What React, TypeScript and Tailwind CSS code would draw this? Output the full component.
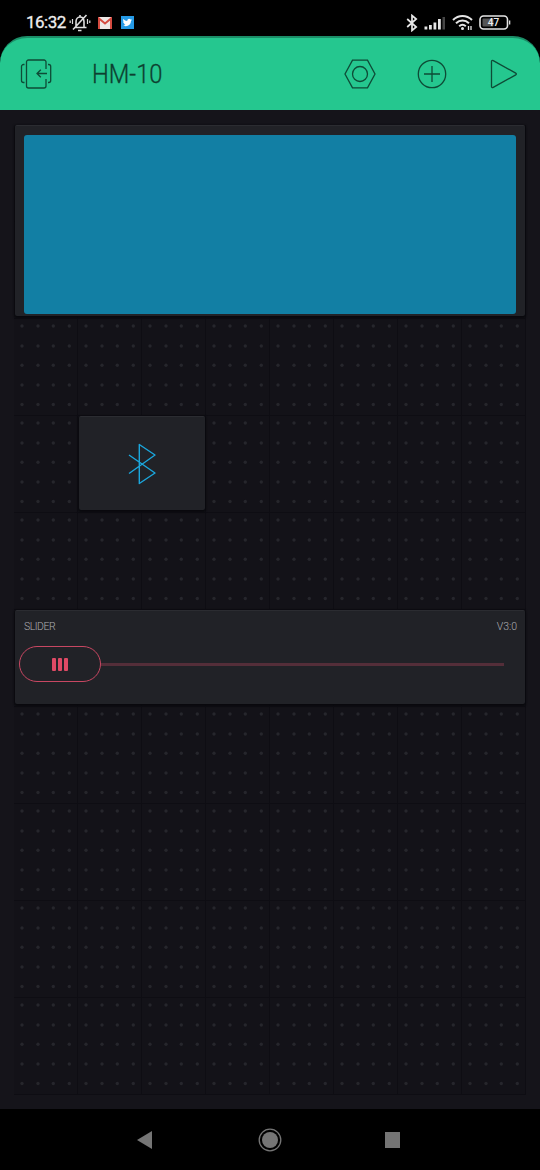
import React from "react";

const COLS = 8;
const ROWS = 10;
const DOT_X = [8, 24, 39.3, 55.3];
const DOT_Y = [7, 27, 46.2, 66, 85.5];

function Cell() {
  return (
    <div className="border-r border-b border-[#0e0d13] bg-[#131218]">
      <svg width="63" height="96" className="block">
        {DOT_Y.map((y) => DOT_X.map((x) => <circle key={`${x}-${y}`} cx={x} cy={y} r="1.7" fill="#26262c" />))}
      </svg>
    </div>
  );
}

function StatusBar() {
  return (
    <div className="flex h-9 items-end justify-between pr-[29px] pl-[26px]">
      <div className="flex h-[27px] items-center">
        <span className="w-10 text-[17px] leading-none tracking-[-0.5px] text-[#eeeeee] [-webkit-text-stroke:0.3px]">16:32</span>
        <svg width="22" height="20" viewBox="0 0 22 20" className="ml-[3px]" fill="none" stroke="#dedede" strokeWidth="1.6">
          <path d="M5.500 14.500h12M7 14V9c0-3 1.500-5 4-5s4 2 4 5v5M11 4V2M9 17.500h3.500M4 16.500 17.500 2" />
          <path d="M3.500 6v5M18.500 6v5M1.200 7.500v2.500M20.800 7.500v2.500" strokeWidth="1.200" />
        </svg>
        <svg width="14" height="12" viewBox="0 0 14 12" className="ml-[7px]">
          <rect width="14" height="12" rx="1" fill="#eee7e5" />
          <path d="M1 12V1.500L7 6.500l6-5V12" fill="none" stroke="#d54b40" strokeWidth="2" />
        </svg>
        <svg width="13" height="13" viewBox="0 0 13 13" className="ml-[9px]">
          <rect width="13" height="13" fill="#259ae6" />
          <path d="M2.300 3c1.200 1.300 2.400 1.900 4 2C6 3.300 8.100 2 9.500 3.400l1.300-.4-.7 1.200.7.100-.9.900c0 3.500-3.800 6.200-7.700 4.300 1 0 1.700-.2 2.400-.7-.9-.1-1.400-.6-1.600-1.300h.7C2.600 7 2.100 6.300 2.100 5.400l.8.200C2 4.800 1.900 3.900 2.300 3Z" fill="white" />
        </svg>
      </div>
      <div className="flex h-[27px] items-center">
        <svg width="12" height="18" viewBox="0 0 12 18" fill="none" stroke="#e8e8e8" strokeWidth="1.700">
          <path d="m1.200 5 9 8L6 16.500V1.500L10.200 5l-9 8" />
        </svg>
        <svg width="22" height="14" viewBox="0 0 22 14" className="ml-[6px]">
          <path d="M.5 10.500h2.800v3H.5zM5 9h2.800v4.500H5zM9.500 6.500h2.800v7H9.500zM14 3h2.800v10.500H14z" fill="#e5e5e5" />
          <path d="M18.500 1h2.500v12.500h-2.500z" fill="#454545" />
        </svg>
        <svg width="21" height="17" viewBox="0 0 21 17" className="ml-[6px]" fill="none" stroke="#e5e5e5" strokeWidth="2">
          <path d="M1 6c5.500-5.300 13.500-5.300 19 0M4 9.300c3.800-3.600 9.200-3.600 13 0M7.200 12.300c2-1.800 4.600-1.800 6.600 0" />
          <circle cx="10.500" cy="14.500" r="1.500" fill="#e5e5e5" stroke="none" />
          <path d="M16.500 12v4M19 12v4" strokeWidth="1.300" />
        </svg>
        <svg width="32" height="15" viewBox="0 0 32 15" className="ml-[6px]">
          <rect x="1" y="1" width="27.500" height="13" rx="3.500" fill="none" stroke="#e5e5e5" strokeWidth="1.600" />
          <rect x="3.500" y="3.500" width="11" height="8" rx="1" fill="#555" />
          <path d="M30 5.500h1.300v4H30z" fill="#ddd" />
          <text x="14.500" y="11" textAnchor="middle" fontSize="10" fontWeight="500" fill="#eeeeee">47</text>
        </svg>
      </div>
    </div>
  );
}

function Header() {
  return (
    <header className="flex h-[74px] items-center rounded-t-[27px] border-t-2 border-[#1c8e68] bg-[#25c78f] pr-[22px] pl-5 text-[#0e4b36]">
      <svg width="32" height="30" viewBox="0 0 32 30" fill="none" stroke="currentColor" strokeWidth="1.300">
        <path d="M26 10V3a2 2 0 0 0-2-2H8.500a2 2 0 0 0-2 2v24a2 2 0 0 0 2 2H24a2 2 0 0 0 2-2v-7" />
        <path d="M27 14.500H17m3.800-3.800L17 14.500l3.800 3.800M4.500 5.500h-1a2 2 0 0 0-2 2v14a2 2 0 0 0 2 2h1M28 5.500h.7a2 2 0 0 1 2 2v14a2 2 0 0 1-2 2H28" />
      </svg>
      <h1 className="ml-10 w-[106px] origin-left scale-x-[.95] text-[25px] leading-none font-light whitespace-nowrap text-[#0d3f30] [-webkit-text-stroke:0.3px]">HM-10</h1>
      <div className="ml-auto flex items-center">
        <svg width="32" height="30" viewBox="0 0 32 30" className="mr-[41px]" fill="none" stroke="currentColor" strokeWidth="1.300">
          <path d="M8.500 1.200h15L31 15l-7.500 13.800h-15L1 15Z" />
          <circle cx="16" cy="15" r="7.500" />
        </svg>
        <svg width="30" height="30" viewBox="0 0 30 30" className="mr-[43px]" fill="none" stroke="currentColor" strokeWidth="1.300">
          <circle cx="15" cy="15" r="13.700" />
          <path d="M15 7v16M7 15h16" />
        </svg>
        <svg width="28" height="30" viewBox="0 0 28 30" fill="none" stroke="currentColor" strokeWidth="1.300">
          <path d="M1.500 2.500c0-1 .8-1.400 1.700-.9l22.500 12.500c.9.500.9 1.300 0 1.800L3.200 28.400c-.9.500-1.700.1-1.700-.9Z" />
        </svg>
      </div>
    </header>
  );
}

const card = "z-10 mr-[1px] mb-[3px] ml-[1px] rounded-[2px] border-t border-[#2b2c31] bg-[#212227] shadow-[0_1px_2px_1px_#09090d]";

function Board() {
  return (
    <main className="h-[999px] bg-[#15141a] pt-[15px] pl-[14px]">
      <div className="grid h-[970px] w-[512px] grid-cols-[repeat(8,64px)] grid-rows-[repeat(10,97px)]">
        {Array.from({ length: ROWS * COLS }, (_, i) => {
          const row = Math.floor(i / COLS) + 1;
          const col = (i % COLS) + 1;
          return (
            <div key={i} className="grid" style={{ gridRow: row, gridColumn: col }}>
              <Cell />
            </div>
          );
        })}

        <section className={`${card} col-span-full col-start-1 row-span-2 row-start-1 px-[9px] pt-[9px] pb-[2px]`}>
          <div className="h-full rounded-[3px] bg-[#127fa4]" />
        </section>

        <section className={`${card} col-span-2 col-start-2 row-start-4 flex items-center justify-center`}>
          <svg width="28" height="42" viewBox="0 0 28 42" fill="none" stroke="#1ba6dc" strokeWidth="1.400" strokeLinejoin="round">
            <path d="m1 12 26 18-15.700 10.500V1.500L27 12 1 30.500" />
          </svg>
        </section>

        <section className={`${card} col-span-full col-start-1 row-start-6`}>
          <div className="flex h-[35px] justify-between pt-[9px] pr-[8px] pl-[9px] text-[10.500px] leading-[13px] font-light text-[#aeafb3]">
            <span className="tracking-[-0.5px]">SLIDER</span>
            <span>V3:0</span>
          </div>
          <div className="flex items-center pr-[21px] pl-1">
            <div className="flex h-[36px] w-[82px] items-center justify-center gap-[2px] rounded-full border border-[#c84762]">
              <i className="h-[13px] w-1 rounded-[1px] bg-[#de4a65]" />
              <i className="h-[13px] w-1 rounded-[1px] bg-[#de4a65]" />
              <i className="h-[13px] w-1 rounded-[1px] bg-[#de4a65]" />
            </div>
            <div className="h-[3px] flex-1 bg-[#542e39]" />
          </div>
        </section>
      </div>
    </main>
  );
}

function NavigationBar() {
  return (
    <nav className="flex h-[61px] items-center justify-between bg-black pr-[140px] pl-[137px]">
      <svg width="15" height="18" viewBox="0 0 15 18"><path d="M0 9 15 0v18Z" fill="#757575" /></svg>
      <svg width="24" height="24" viewBox="0 0 24 24" className="ml-[3px]">
        <circle cx="12" cy="12" r="10.800" fill="none" stroke="#757575" strokeWidth="1.300" />
        <circle cx="12" cy="12" r="8" fill="#757575" />
      </svg>
      <div className="h-4 w-[15px] bg-[#757575]" />
    </nav>
  );
}

export default function App() {
  return (
    <div className="h-[1170px] w-[540px] overflow-hidden bg-black font-['Roboto','Liberation_Sans',sans-serif]">
      <StatusBar />
      <Header />
      <Board />
      <NavigationBar />
    </div>
  );
}
